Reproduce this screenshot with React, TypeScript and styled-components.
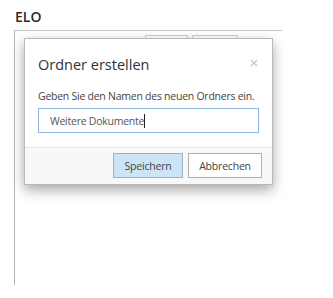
import styled, { createGlobalStyle } from "styled-components";

const GlobalStyle = createGlobalStyle`
  html, body {
    margin: 0;
    padding: 0;
    background: #ffffff;
  }
  body {
    font-family: "Open Sans", "Noto Sans", sans-serif;
    color: #333;
  }
`;

const App = () => {
  return (
    <>
      <GlobalStyle />
      <Page>
        <AppTitle>ELO</AppTitle>
        <Window>
          <Toolbar>
            <ToolButton />
            <ToolButton />
          </Toolbar>

          <Dialog role="dialog" aria-labelledby="dlg-title">
            <DialogHeader>
              <DialogTitle id="dlg-title">Ordner erstellen</DialogTitle>
              <CloseButton aria-label="Schließen">
                <svg width="8" height="8" viewBox="0 0 8 8">
                  <path d="M1 1 L7 7 M7 1 L1 7" stroke="#c4c4cc" strokeWidth="1.2" />
                </svg>
              </CloseButton>
            </DialogHeader>

            <DialogBody>
              <Label htmlFor="folder-name">Geben Sie den Namen des neuen Ordners ein.</Label>
              <InputBox>
                <InputText>Weitere Dokumente</InputText>
                <Caret />
              </InputBox>
            </DialogBody>

            <DialogFooter>
              <Button $primary>Speichern</Button>
              <Button>Abbrechen</Button>
            </DialogFooter>
          </Dialog>
        </Window>
      </Page>
    </>
  );
};

export default App;

const Page = styled.div`
  width: 333px;
  height: 298px;
  padding: 7px 0 0 14px;
  box-sizing: border-box;
`;

const AppTitle = styled.h1`
  margin: 0 0 0 1px;
  font-size: 14px;
  line-height: 20px;
  font-weight: 600;
  color: #2b2b2b;
  height: 23px;
`;

const Window = styled.div`
  position: relative;
  width: 268px;
  height: 255px;
  border-left: 1px solid #b4b4b4;
  border-top: 1px solid #c8c8c8;
  box-sizing: border-box;
`;

const Toolbar = styled.div`
  display: flex;
  gap: 4px;
  padding: 4px 0 0 130px;
`;

const ToolButton = styled.div`
  width: 43px;
  height: 22px;
  border: 1px solid #cfcfcf;
  box-sizing: border-box;
  &:last-child {
    width: 46px;
  }
`;

const Dialog = styled.div`
  position: absolute;
  left: 9px;
  top: 7px;
  width: 249px;
  height: 147px;
  background: #ffffff;
  border: 1px solid #b9b9b9;
  box-sizing: border-box;
  box-shadow: 0 5px 12px rgba(0, 0, 0, 0.35);
  display: flex;
  flex-direction: column;
`;

const DialogHeader = styled.div`
  display: flex;
  align-items: center;
  justify-content: space-between;
  padding: 15px 14px 0 13px;
`;

const DialogTitle = styled.h2`
  margin: 0;
  font-size: 14.5px;
  line-height: 22px;
  font-weight: 400;
  color: #333;
`;

const CloseButton = styled.button`
  border: 0;
  background: none;
  padding: 0;
  display: flex;
  margin-top: -4px;
`;

const DialogBody = styled.div`
  padding: 12px 13px 14px 13px;
  display: flex;
  flex-direction: column;
  gap: 4px;
`;

const Label = styled.label`
  font-size: 10.5px;
  letter-spacing: -0.25px;
  line-height: 16px;
  color: #444;
  white-space: nowrap;
`;

const InputBox = styled.div`
  height: 25px;
  border: 1px solid #8fb6e0;
  box-sizing: border-box;
  display: flex;
  align-items: center;
  padding-left: 11px;
`;

const InputText = styled.span`
  font-size: 10.5px;
  letter-spacing: -0.25px;
  color: #555;
`;

const Caret = styled.span`
  width: 1px;
  height: 14px;
  background: #222;
`;

const DialogFooter = styled.div`
  flex: 1;
  border-top: 1px solid #e4e4e4;
  background: #f8f8f8;
  display: flex;
  justify-content: flex-end;
  align-items: flex-start;
  gap: 5px;
  padding: 5px 10px 0 0;
`;

const Button = styled.button<{ $primary?: boolean }>`
  height: 25px;
  padding: 0;
  font-family: "Open Sans", "Noto Sans", sans-serif;
  font-size: 10.5px;
  letter-spacing: -0.2px;
  color: #444;
  background: ${({ $primary }) => ($primary ? "#cce4f7" : "#ffffff")};
  border: 1px solid ${({ $primary }) => ($primary ? "#9ab3cc" : "#adadad")};
  width: ${({ $primary }) => ($primary ? "70px" : "74px")};
  box-sizing: border-box;
`;
